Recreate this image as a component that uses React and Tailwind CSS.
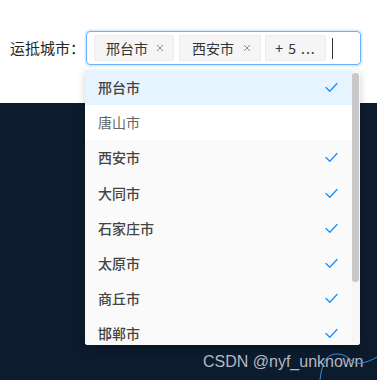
import React from "react";

const cities = [
  { name: "邢台市", sel: true, bg: "bg-[#e6f4ff]" },
  { name: "唐山市", sel: false, bg: "bg-white" },
  { name: "西安市", sel: true, bg: "bg-[#fafafa]" },
  { name: "大同市", sel: true, bg: "bg-[#fafafa]" },
  { name: "石家庄市", sel: true, bg: "bg-[#fafafa]" },
  { name: "太原市", sel: true, bg: "bg-[#fafafa]" },
  { name: "商丘市", sel: true, bg: "bg-[#fafafa]" },
  { name: "邯郸市", sel: true, bg: "bg-[#fafafa]" },
];

function Check() {
  return (
    <svg width="13" height="11" viewBox="0 0 13 11" fill="none">
      <path d="M1 5.5 L4.8 9.3 L12 1.5" stroke="#1890ff" strokeWidth="1.3" strokeLinecap="round" strokeLinejoin="round" />
    </svg>
  );
}

function Close() {
  return (
    <svg width="8" height="8" viewBox="0 0 8 8" fill="none">
      <path d="M1 1 L7 7 M7 1 L1 7" stroke="#8c8c8c" strokeWidth="1" />
    </svg>
  );
}

export default function App() {
  return (
    <div className="relative h-[380px] w-[377px] overflow-hidden bg-[#0c1b2d] font-['Noto_Sans_CJK_SC',sans-serif]">
      <div className="flex h-[103px] items-start bg-white pl-[10px] pt-[31px]">
        <div className="flex h-[34px] items-center text-[15px] text-[#262626]">运抵城市：</div>
        <div className="ml-[1px] flex h-[34px] w-[275px] items-center gap-[4px] rounded-[4px] border border-[#69b1ff] pl-[7px] shadow-[0_0_0_1.5px_rgba(24,144,255,0.18)]">
          <div className="flex h-[26px] w-[80px] items-center gap-[8px] rounded-[2px] border border-[#ececec] bg-[#f5f5f5] pl-[11px] text-[14px] text-[#333]">
            <span>邢台市</span>
            <Close />
          </div>
          <div className="ml-[1px] flex h-[26px] w-[82px] items-center gap-[9px] rounded-[2px] border border-[#ececec] bg-[#f5f5f5] pl-[12px] text-[14px] text-[#333]">
            <span>西安市</span>
            <Close />
          </div>
          <div className="flex h-[26px] w-[61px] items-center justify-center rounded-[2px] border border-[#ececec] bg-[#f5f5f5] text-[14px] tracking-[1px] text-[#333]">
            + 5 ...
          </div>
          <div className="ml-[2px] h-[21px] w-[1px] bg-[#333]" />
        </div>
      </div>

      <div className="absolute left-[85px] top-[70px] flex h-[275px] w-[275px] overflow-hidden rounded-b-[3px] bg-white shadow-[0_3px_8px_rgba(0,0,0,0.18)]">
        <div className="flex w-[267px] flex-col">
          {cities.map((c) => (
            <div
              key={c.name}
              className={`flex h-[35.2px] shrink-0 items-center justify-between pl-[13px] pr-[14px] text-[14px] ${c.bg} ${
                c.sel ? "font-medium text-[#444]" : "font-normal text-[#666]"
              }`}
            >
              <span>{c.name}</span>
              {c.sel && <Check />}
            </div>
          ))}
        </div>
        <div className="flex w-[8px] flex-col bg-[#f7f7f7] pt-[3px]">
          <div className="h-[209px] w-[7px] rounded-[3px] bg-[#c8c8c8]" />
        </div>
      </div>

      <div className="absolute left-[203px] top-[350px] font-['Liberation_Sans',sans-serif] text-[16px] text-[#b4b9c2]">
        CSDN @nyf_unknown
      </div>
      <svg className="absolute left-0 top-0" width="377" height="380" viewBox="0 0 377 380" fill="none">
        <path
          d="M320 380 C321 372 322 366 325 361 C327 357 331 354 337 354 C343 354 348 357 352 361 C355 363 358 364 362 363 C367 362 372 360 377 357"
          stroke="#3a8ed8"
          strokeWidth="1"
        />
      </svg>
    </div>
  );
}
